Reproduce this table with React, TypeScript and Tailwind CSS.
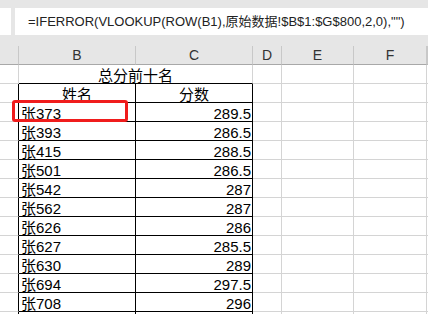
const rows: [string, string][] = [
  ["张373", "289.5"],
  ["张393", "286.5"],
  ["张415", "288.5"],
  ["张501", "286.5"],
  ["张542", "287"],
  ["张562", "287"],
  ["张626", "286"],
  ["张627", "285.5"],
  ["张630", "289"],
  ["张694", "297.5"],
  ["张708", "296"],
  ["", ""],
];

const cellFont = { fontFamily: '"Liberation Sans", "Noto Sans CJK SC", sans-serif' };

function Grid({ children }: { children: React.ReactNode }) {
  return (
    <div className="grid grid-cols-[19px_117px_117px_29px_72px_73px_1fr] auto-rows-[19px]">
      {children}
    </div>
  );
}

export default function App() {
  return (
    <div className="relative h-[314px] w-[428px] overflow-hidden bg-white text-[15px] text-black" style={cellFont}>
      {/* formula bar */}
      <div className="flex h-[46px] items-start gap-[4px] bg-[#e6e6e6] pt-[8px]">
        <div className="h-[27px] w-[11px] bg-white" />
        <div className="flex h-[27px] flex-1 items-center bg-white pl-[13px] text-[13px] text-[#222]">
          =IFERROR(VLOOKUP(ROW(B1),原始数据!$B$1:$G$800,2,0),"")
        </div>
      </div>

      <Grid>
        {/* column header */}
        {["", "B", "C", "D", "E", "F", ""].map((c, i) => (
          <div
            key={i}
            className="flex items-center justify-center border-r border-b border-r-[#c8c8c8] border-b-[#a8a8a8] bg-[#e6e6e6] pt-[1px] text-[14px] text-[#333]"
          >
            {c}
          </div>
        ))}

        {/* title row */}
        <div className="border-r border-b border-[#d4d4d4]" />
        <div className="col-span-2 flex items-end justify-center border-r border-b border-r-[#d4d4d4] border-b-black">
          <span className="leading-[14px]">总分前十名</span>
        </div>
        <div className="border-r border-b border-[#d4d4d4]" />
        <div className="border-r border-b border-[#d4d4d4]" />
        <div className="border-r border-b border-[#d4d4d4]" />
        <div className="border-b border-[#d4d4d4]" />

        {/* header row */}
        <div className="border-r border-b border-r-black border-b-[#d4d4d4]" />
        <div className="flex items-end justify-center border-r border-b border-black">
          <span className="leading-[14px]">姓名</span>
        </div>
        <div className="flex items-end justify-center border-r border-b border-black">
          <span className="leading-[14px]">分数</span>
        </div>
        <div className="border-r border-b border-[#d4d4d4]" />
        <div className="border-r border-b border-[#d4d4d4]" />
        <div className="border-r border-b border-[#d4d4d4]" />
        <div className="border-b border-[#d4d4d4]" />

        {rows.map(([name, score], i) => (
          <div key={i} className="contents">
            <div className="border-r border-b border-r-black border-b-[#d4d4d4]" />
            <div className="flex items-end border-r border-b border-black pl-[2px]">
              <span className="leading-[14px]">{name}</span>
            </div>
            <div className="flex items-end justify-end border-r border-b border-black pr-[1px]">
              <span className="leading-[14px]">{score}</span>
            </div>
            <div className="border-r border-b border-[#d4d4d4]" />
            <div className="border-r border-b border-[#d4d4d4]" />
            <div className="border-r border-b border-[#d4d4d4]" />
            <div className="border-b border-[#d4d4d4]" />
          </div>
        ))}
      </Grid>

      {/* highlight box */}
      <div className="absolute left-[12px] top-[100px] h-[22px] w-[116px] rounded-[3px] border-[3px] border-[#f01c1c]" />
    </div>
  );
}
